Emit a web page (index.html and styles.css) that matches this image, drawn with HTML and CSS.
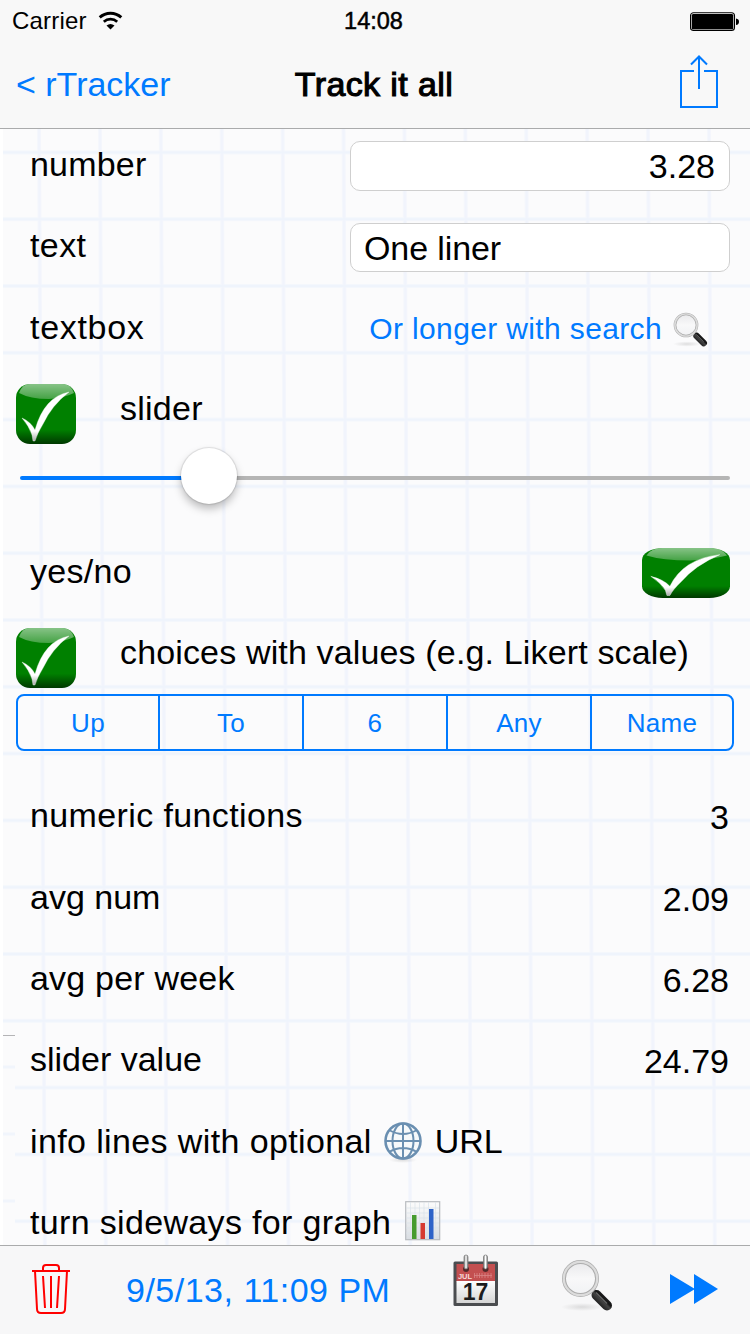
FILE: index.html
```html
<!DOCTYPE html>
<html lang="en">
<head>
<meta charset="utf-8">
<title>Track it all</title>
<link rel="stylesheet" href="styles.css">
</head>
<body>
<svg class="defs" width="0" height="0" aria-hidden="true">
  <defs>
    <linearGradient id="green" x1="0" y1="0" x2="0" y2="1">
      <stop offset="0" stop-color="#008000"/><stop offset=".76" stop-color="#008000"/><stop offset="1" stop-color="#003800"/>
    </linearGradient>
    <linearGradient id="gloss" x1="0" y1="0" x2="0" y2="1">
      <stop offset="0" stop-color="#fff" stop-opacity=".53"/><stop offset="1" stop-color="#fff" stop-opacity=".27"/>
    </linearGradient>
    <linearGradient id="tick" x1="0" y1="0" x2="0" y2="1">
      <stop offset="0" stop-color="#fff"/><stop offset=".8" stop-color="#fff"/><stop offset="1" stop-color="#aaa"/>
    </linearGradient>
    <linearGradient id="handle" x1="0" y1="1" x2="1" y2="0">
      <stop offset="0" stop-color="#111"/><stop offset=".5" stop-color="#444"/><stop offset=".65" stop-color="#151515"/><stop offset="1" stop-color="#222"/>
    </linearGradient>
    <linearGradient id="lens" x1="0" y1="0" x2="0" y2="1">
      <stop offset="0" stop-color="#e9e9eb"/><stop offset=".5" stop-color="#f8f8f9"/><stop offset="1" stop-color="#f1f2f4"/>
    </linearGradient>
    <radialGradient id="shade"><stop offset="0" stop-color="#999" stop-opacity=".3"/><stop offset="1" stop-color="#999" stop-opacity="0"/></radialGradient>
    <linearGradient id="chart" x1="0" y1="0" x2="0" y2="1">
      <stop offset="0" stop-color="#fcfcfc"/><stop offset="1" stop-color="#d9dde2"/>
    </linearGradient>
    <linearGradient id="page" x1="0" y1="0" x2="0" y2="1">
      <stop offset="0" stop-color="#fff"/><stop offset="1" stop-color="#d5d5d5"/>
    </linearGradient>
    <linearGradient id="ring" x1="0" y1="0" x2="1" y2="0">
      <stop offset="0" stop-color="#777"/><stop offset=".5" stop-color="#fff"/><stop offset="1" stop-color="#777"/>
    </linearGradient>
    <symbol id="check" viewBox="0 0 60 60" preserveAspectRatio="none">
      <rect width="60" height="60" rx="14" fill="url(#green)"/>
      <path d="M3 9Q6 0 14 0H46Q55 0 58 9Q48 14 33 15Q14 15 3 9Z" fill="url(#gloss)"/>
      <path d="M6 34Q15 38 19 46Q28 13 53 8Q36 21 27 40Q21 50 19 57H17L16 51Q13 42 6 34Z" fill="url(#tick)" stroke="#fff" stroke-opacity=".7" stroke-width=".5"/>
    </symbol>
    <symbol id="magnifier" viewBox="0 0 54 54">
      <ellipse cx="21" cy="48" rx="21" ry="4" fill="url(#shade)"/>
      <path d="M31 33L34 30L37 34L35 37Z" fill="#888"/>
      <path d="M35.500 36L46 46.500" stroke="url(#handle)" stroke-width="10" stroke-linecap="round"/>
      <path d="M35 33.500L46 44.500" stroke="#666" stroke-width="1.200"/>
      <circle cx="19.500" cy="19.500" r="16.500" fill="url(#lens)" stroke="#adadad" stroke-width="4"/>
      <circle cx="19.500" cy="19.500" r="16.700" fill="none" stroke="#dcdcdc" stroke-width="2.200"/>
    </symbol>
  </defs>
</svg>

<div class="screen">
  <header class="header">
    <div class="status">
      <div class="carrier">
        <span class="carrier-name">Carrier</span>
        <svg class="wifi" width="26" height="20" viewBox="0 0 26 20">
          <path d="M1.700 6.400A16 16 0 0 1 23.300 6.400" fill="none" stroke="#000" stroke-width="2.900"/>
          <path d="M5.800 10.800A10 10 0 0 1 19.200 10.800" fill="none" stroke="#000" stroke-width="2.700"/>
          <path d="M8.500 14.500Q12.500 11.500 16.500 14.500L12.500 18.500Z"/>
        </svg>
      </div>
      <span class="clock">14:08</span>
      <svg class="battery" width="50" height="20" viewBox="0 0 50 20">
        <rect x=".5" y=".8" width="44" height="17.600" rx="3" fill="#fff" stroke="#000" stroke-width="1.100"/>
        <rect x="1.700" y="2" width="41.600" height="15.200" rx="1.500"/>
        <path d="M46 6.500Q49 7 49 9.700Q49 12.500 46 13Z"/>
      </svg>
    </div>
    <nav class="nav">
      <a class="back">&lt; rTracker</a>
      <h1 class="title">Track it all</h1>
      <svg class="share" width="40" height="54" viewBox="0 0 40 54" fill="none" stroke="#007aff" stroke-width="2">
        <path d="M15 16H2V52H38V16H25M20 34V2M12 9.500L20 1.500L28 9.500"/>
      </svg>
    </nav>
  </header>

  <main class="paper">
    <svg class="grid-lines" width="750" height="1116" aria-hidden="true">
      <defs>
        <pattern id="squares" width="60.900" height="66.800" patternUnits="userSpaceOnUse" patternTransform="translate(7 -11.500) skewX(.3)">
          <path d="M32 0V66.800" stroke="#f5f7fc" stroke-width="4"/>
          <path d="M0 34.800H60.900" stroke="#f4f7fc" stroke-width="4"/>
          <path d="M32 0V66.800" stroke="#f1f4fc" stroke-width="2"/>
          <path d="M0 34.800H60.900" stroke="#eff4fc" stroke-width="2"/>
        </pattern>
      </defs>
      <rect x="3" width="747" height="1116" fill="#fbfbfc"/>
      <rect x="3" width="747" height="1116" fill="url(#squares)"/>
      <path d="M3 907H15V1116H3Z" fill="#fbfbfc"/>
      <path d="M3 938H15M3 1005H15M3 1072H15" stroke="#f1f5fc" stroke-width="3"/>
      <path d="M3 906.500H15" stroke="#b4b4b6"/>
    </svg>
    <div class="rows">
      <div class="row"><span class="label l-number">number</span><div class="field field-number">3.28</div></div>
      <div class="row"><span class="label l-text">text</span><div class="field field-text">One liner</div></div>
      <div class="row"><span class="label l-textbox">textbox</span>
        <a class="note">Or longer with search <svg class="note-icon"><use href="#magnifier"/></svg></a></div>
      <div class="row row-check"><svg class="check"><use href="#check"/></svg><span class="label l-slider">slider</span></div>
      <div class="row row-slider"><div class="track"><div class="fill"></div><div class="thumb"></div><div class="rest"></div></div></div>
      <div class="row"><span class="label l-yes">yes/no</span><svg class="check check-wide"><use href="#check"/></svg></div>
      <div class="row row-check"><svg class="check"><use href="#check"/></svg><span class="label l-choices">choices with values (e.g. Likert scale)</span></div>
      <div class="row row-segments">
        <div class="segments"><span>Up</span><span>To</span><span>6</span><span>Any</span><span>Name</span></div>
      </div>
      <div class="row"><span class="label l-functions">numeric functions</span><span class="value">3</span></div>
      <div class="row"><span class="label">avg num</span><span class="value">2.09</span></div>
      <div class="row"><span class="label l-week">avg per week</span><span class="value">6.28</span></div>
      <div class="row"><span class="label">slider value</span><span class="value">24.79</span></div>
      <div class="row inline-row"><span class="label l-info">info lines with optional</span>
        <svg class="globe" width="40" height="42" viewBox="0 0 40 42" fill="none" stroke="#6a8fb1" stroke-width="2">
          <ellipse cx="20" cy="39" rx="14" ry="3" fill="url(#shade)" stroke="none"/>
          <circle cx="20" cy="20" r="17.500" fill="#f6f9fb" stroke-width="2.600"/>
          <ellipse cx="20" cy="20" rx="10.500" ry="17.500"/>
          <path d="M20 2V38M2 20H38M6 9Q20 17 34 9M6 31Q20 23 34 31"/>
        </svg>
        <span class="label">URL</span></div>
      <div class="row inline-row"><span class="label l-turn">turn sideways for graph</span>
        <svg class="chart" width="36" height="40" viewBox="0 0 36 40">
          <rect x=".7" y=".7" width="34" height="38" fill="url(#chart)" stroke="#b9bcc0" stroke-width="1.200"/>
          <path d="M5.500 1V38M10 1V38M14.500 1V38M19 1V38M23.500 1V38M30.500 1V38M1 7H34M1 12H34M1 17H34M1 22H34M1 27H34M1 32H34" stroke="#dae2ea" stroke-width=".7"/>
          <path d="M7 14H11.500V38H7Z" fill="#459b2e"/><path d="M15.500 22H20V38H15.500Z" fill="#d63a30"/><path d="M24 8H28.500V38H24Z" fill="#2e63c8"/>
        </svg></div>
    </div>
  </main>

  <footer class="toolbar">
    <svg class="trash" width="38" height="52" viewBox="0 0 38 52" fill="none" stroke="#f00" stroke-width="2">
      <path d="M0 8H38M11 7V5Q11 2 14 2H24Q27 2 27 5V7M3 8L5 46Q5 50 9 50H29Q33 50 33 46L35 8M11 13L13 45M19 13V45M27 13L25 45"/>
    </svg>
    <a class="date">9/5/13, 11:09 PM</a>
    <svg class="calendar" width="46" height="54" viewBox="0 0 46 54">
      <rect x=".5" y="7.500" width="44.500" height="44.500" rx="1.500" fill="#4b4d50"/>
      <path d="M3.500 10H42V28H3.500Z" fill="#c34f50"/>
      <path d="M3.500 27H42V49H3.500Z" fill="url(#page)"/>
      <circle cx="13" cy="15" r="3" fill="#51292a"/><circle cx="32.500" cy="15" r="3" fill="#51292a"/>
      <rect x="11" y="1" width="4" height="14" rx="2" fill="url(#ring)" stroke="#777" stroke-width=".7"/>
      <rect x="30.500" y="1" width="4" height="14" rx="2" fill="url(#ring)" stroke="#777" stroke-width=".7"/>
      <text class="cal-month" x="5" y="24.500" textLength="14">JUL</text>
      <path d="M21.500 19V24M24 19V24M26.500 19V24M29 19V24M32 19V24M35 19V24M38 19V24M21 21.500H39" stroke="#d98586" stroke-width=".8"/>
      <text class="cal-day" x="22.500" y="45.500" text-anchor="middle">17</text>
    </svg>
    <svg class="search"><use href="#magnifier"/></svg>
    <svg class="forward" width="48" height="30" viewBox="0 0 48 30" fill="#007aff"><path d="M0 0L25 15L0 30ZM24 0L48 15L24 30Z"/></svg>
  </footer>
</div>
</body>
</html>
```
FILE: styles.css
```css
* { box-sizing: border-box; }
body { margin: 0; background: #fff; color: #000; font-family: "Liberation Sans", Arial, sans-serif; }
svg { display: block; flex: none; }
.defs { position: absolute; }
.screen { width: 750px; height: 1334px; display: flex; flex-direction: column; overflow: hidden; }

.header { height: 129px; flex: none; background: #f8f8f8; border-bottom: 1px solid #aaabac; }
.status { display: grid; grid-template-columns: 1fr auto 1fr; align-items: center; height: 42px; padding: 0 10px 0 12px; }
.carrier { display: flex; align-items: center; gap: 11px; font-size: 24px; }
.carrier-name { letter-spacing: .2px; }
.clock { margin-right: 5px; font-size: 23.500px; -webkit-text-stroke: .5px #000; }
.battery { justify-self: end; margin-top: 1px; }
.nav { display: grid; grid-template-columns: 1fr auto 1fr; align-items: center; height: 84px; padding: 0 31px 0 16px; }
.back { color: #007aff; font-size: 34px; }
.title { margin: 0 0 0 -1px; font-size: 34px; font-weight: 400; letter-spacing: .4px; padding-left: 14px; -webkit-text-stroke: 1.100px #000; }
.share { justify-self: end; margin-top: -4px; }

.paper { display: grid; height: 1116px; flex: none; overflow: hidden; }
.grid-lines, .rows { grid-area: 1 / 1; }
.rows { position: relative; }
.row { display: flex; align-items: flex-start; justify-content: space-between; height: 81.400px; padding: 0 20px 0 30px; }
.label { font-size: 34px; line-height: 71px; white-space: nowrap; }
.l-number { letter-spacing: .2px; }
.l-text { letter-spacing: .4px; }
.l-textbox { letter-spacing: .7px; }
.l-slider { letter-spacing: .25px; }
.l-yes { letter-spacing: .3px; }
.l-choices { letter-spacing: .15px; }
.l-functions { letter-spacing: .38px; }
.l-week { letter-spacing: .2px; }
.l-info { letter-spacing: .38px; }
.l-turn { letter-spacing: .34px; }
.field { width: 380px; height: 50px; margin-top: 12px; padding: 0 14px; border: 1.500px solid #cfcfcf; border-radius: 10px; background: #fff; font-size: 34px; line-height: 49px; }
.field-number { text-align: right; }
.field-text { height: 49px; margin-top: 12.600px; padding-left: 13px; letter-spacing: -.1px; }
.note { display: flex; align-items: center; gap: 11px; height: 75px; padding-right: 21px; color: #007aff; font-size: 30px; letter-spacing: .36px; white-space: nowrap; }
.note-icon { width: 36px; height: 36px; margin-top: 2px; }
.row-check { justify-content: flex-start; gap: 44px; padding-left: 16px; }
.check { width: 60px; height: 60px; margin-top: 11px; }
.check-wide { width: 88px; height: 50px; margin-top: 12px; }
.row-slider { padding-left: 20px; }
.track { display: flex; align-items: center; width: 710px; height: 56px; margin-top: -7px; }
.fill { width: 162px; height: 4px; margin-top: 4px; border-radius: 2px 0 0 2px; background: #007aff; }
.rest { flex: 1; height: 4px; margin-top: 4px; border-radius: 0 2px 2px 0; background: #b5b5b5; }
.thumb { width: 56px; height: 56px; margin: 0 -1px; border-radius: 50%; background: #fff; box-shadow: 0 0 1px 1px rgba(0,0,0,.1), 0 5px 9px rgba(0,0,0,.25); z-index: 1; }
.row-segments { padding: 0 16px; }
.segments { display: grid; grid-template-columns: 140px 144px 144px 144px 142px; width: 718px; height: 57px; margin-top: -5px; border: 2px solid #007aff; border-radius: 8px; color: #007aff; font-size: 26px; line-height: 54px; text-align: center; }
.segments span { letter-spacing: .3px; }
.segments span + span { border-left: 2px solid #007aff; }
.value { margin-right: 1px; font-size: 34px; line-height: 74px; }
.inline-row { justify-content: flex-start; }
.globe { margin: 15px 12px 0 11px; }
.chart { margin: 14px 0 0 14px; }

.toolbar { display: flex; align-items: flex-start; height: 89px; flex: none; padding-left: 32px; background: #f7f7f8; border-top: 1px solid #aaabac; }
.trash { margin-top: 17px; }
.date { width: 264px; margin-left: 56px; color: #007aff; font-size: 34px; letter-spacing: .5px; line-height: 88px; white-space: nowrap; }
.calendar { margin: 8px 0 0 63px; }
.search { width: 54px; height: 54px; margin: 13px 0 0 62px; }
.forward { margin: 28px 0 0 55px; }
.cal-month { font-size: 7.500px; font-weight: 700; fill: #f7dcdc; }
.cal-day { font-size: 23px; font-weight: 700; fill: #1c1c1c; }
```
